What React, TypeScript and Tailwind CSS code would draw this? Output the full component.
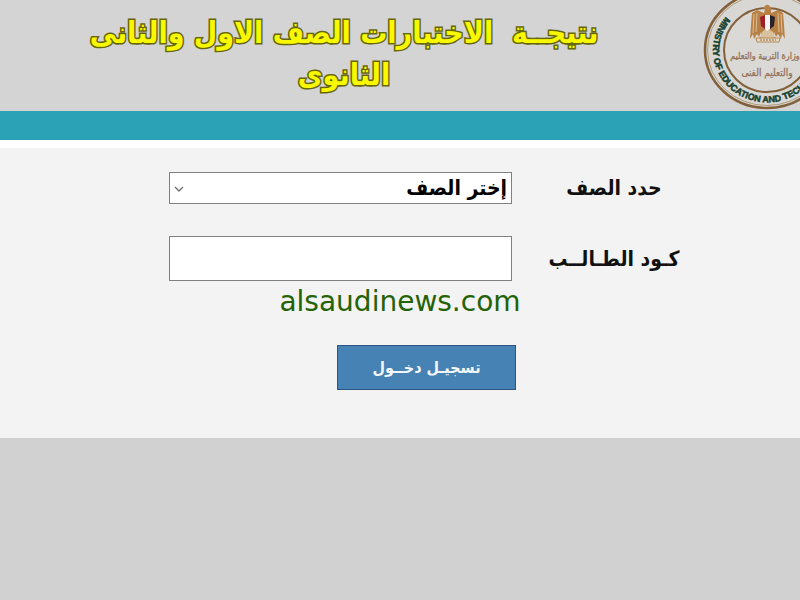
import { useState } from 'react';
import type { FormEvent, ReactNode } from 'react';

interface FieldRowProps {
  id: string;
  label: string;
  children: ReactNode;
}

const FieldRow = ({ id, label, children }: FieldRowProps) => (
  <div className="flex items-center">
    <label htmlFor={id} className="w-[204px] shrink-0 text-center text-[21px] leading-7 font-bold text-[#111]">
      {label}
    </label>
    <div className="relative flex flex-1">{children}</div>
  </div>
);

const MinistryLogo = () => (
  <svg
    viewBox="0 0 100 111"
    className="h-[111px] w-[100px] shrink-0"
    direction="ltr"
    role="img"
    aria-label="Ministry of Education and Technical Education"
  >
    <defs>
      <path id="ring-text" d="M 39 6 A 54 52 0 1 0 95 6" />
    </defs>
    <ellipse cx="67" cy="50" rx="62" ry="58" fill="#d8d7d3" stroke="#82603a" strokeWidth="2.5" />
    <ellipse cx="67" cy="50" rx="59.5" ry="55.5" fill="none" stroke="#b09a7c" strokeWidth="1" />
    <ellipse cx="67" cy="50" rx="43" ry="42" fill="#dad9d6" stroke="#82603a" strokeWidth="2" />
    <text
      style={{ direction: 'ltr' }}
      fontFamily="Liberation Sans, sans-serif"
      fontSize="9"
      fontWeight="700"
      fill="#17402f"
      stroke="#17402f"
      strokeWidth="0.5"
    >
      <textPath href="#ring-text" startOffset="17">
        MINISTRY OF EDUCATION AND TECH
      </textPath>
    </text>
    {/* eagle of Saladin */}
    <path
      d="M64 13 L57 10 L52 13 L51 25 L50 39 L53 34 L54 39 L57 34 L59 37 L61 32 L62 36 L56 40 H79 L73 36 L74 32 L76 37 L78 34 L81 39 L82 34 L85 39 L84 25 L83 13 L78 10 L71 13 L71 8 Q69 4 66 5 L63 8 L65 9 Z"
      fill="#b88045"
    />
    <path d="M54 14 L53 33 M57 13 L56 32 M81 14 L82 33 M78 13 L79 32" fill="none" stroke="#e0c79c" strokeWidth="0.9" />
    <path d="M62 32 L67 28 L73 32 L74 38 H61 Z" fill="#d9c19d" />
    <path d="M60 17 L65 15 V29 L61 26 Z" fill="#9c1f2b" />
    <path d="M65 15 H70 V29 L67 31 L65 29 Z" fill="#f6f4f0" />
    <path d="M70 15 L75 17 L74 26 L70 29 Z" fill="#26212a" />
    <path d="M56 38 H80 L79 42 H57 Z" fill="#e6d8be" stroke="#a77843" strokeWidth="0.8" />
    <path d="M60 40 H76" stroke="#8d6a50" strokeDasharray="2 1" strokeWidth="1" />
    <g
      style={{ direction: 'rtl' }}
      textAnchor="middle"
      fontFamily="DejaVu Sans Condensed, DejaVu Sans, sans-serif"
      fill="#94735a"
      stroke="#94735a"
      strokeWidth="0.3"
    >
      <text x="65" y="59" fontSize="9">وزارة التربية والتعليم</text>
      <text x="67" y="76" fontSize="10">والتعليم الفنى</text>
    </g>
  </svg>
);

export default function App() {
  const [grade, setGrade] = useState('');
  const [code, setCode] = useState('');

  const submit = (event: FormEvent) => {
    event.preventDefault();
  };

  return (
    <div
      dir="rtl"
      className="min-h-screen overflow-x-hidden bg-[#d1d1d1] font-['DejaVu_Sans_Condensed','DejaVu_Sans',sans-serif]"
    >
      <header className="flex items-start bg-[#d4d4d4]">
        <MinistryLogo />
        <h1 className="flex-1 whitespace-pre pt-3 pr-3 text-center text-[30px] leading-[42px] font-bold text-[#f8f800] [-webkit-text-stroke:3px_#66660a] [paint-order:stroke_fill]">
          {'نتيجــة  الاختبارات الصف الاول والثانى\nالثانوى'}
        </h1>
      </header>
      <div className="h-[29px] bg-[#2ca2b7]" />

      <main className="relative border-t-8 border-white bg-[#f3f3f3]">
        <form onSubmit={submit} className="flex flex-col gap-8 pt-6 pr-[84px] pb-12 pl-[169px]">
          <FieldRow id="grade" label="حدد الصف">
            <select
              id="grade"
              value={grade}
              onChange={(event) => setGrade(event.target.value)}
              className="h-8 w-full appearance-none border border-[#808080] bg-white px-1 text-[21px] leading-7 font-bold text-black"
            >
              <option value="">إختر الصف</option>
            </select>
            <svg
              viewBox="0 0 10 6"
              className="pointer-events-none absolute top-[14px] left-[5px] h-[6px] w-[10px]"
              fill="none"
              stroke="#707070"
              strokeWidth="1.4"
            >
              <path d="M1 1 L5 5 L9 1" />
            </svg>
          </FieldRow>

          <FieldRow id="code" label="كـود الطـالــب">
            <input
              id="code"
              type="text"
              value={code}
              onChange={(event) => setCode(event.target.value)}
              className="h-[45px] w-full border border-[#808080] bg-white px-2 text-[21px] text-black"
            />
          </FieldRow>

          <button
            type="submit"
            className="mt-8 mr-[200px] h-[45px] w-[179px] border border-[#2d5380] bg-[#4682b4] text-base font-bold text-[#f3f7fa]"
          >
            تسجيـل دخــول
          </button>
        </form>
        <p
          dir="ltr"
          className="pointer-events-none absolute inset-x-0 top-[134px] text-center font-['Comic_Sans_MS','DejaVu_Sans',sans-serif] text-[28px] leading-10 text-[#236205]"
        >
          alsaudinews.com
        </p>
      </main>
    </div>
  );
}
